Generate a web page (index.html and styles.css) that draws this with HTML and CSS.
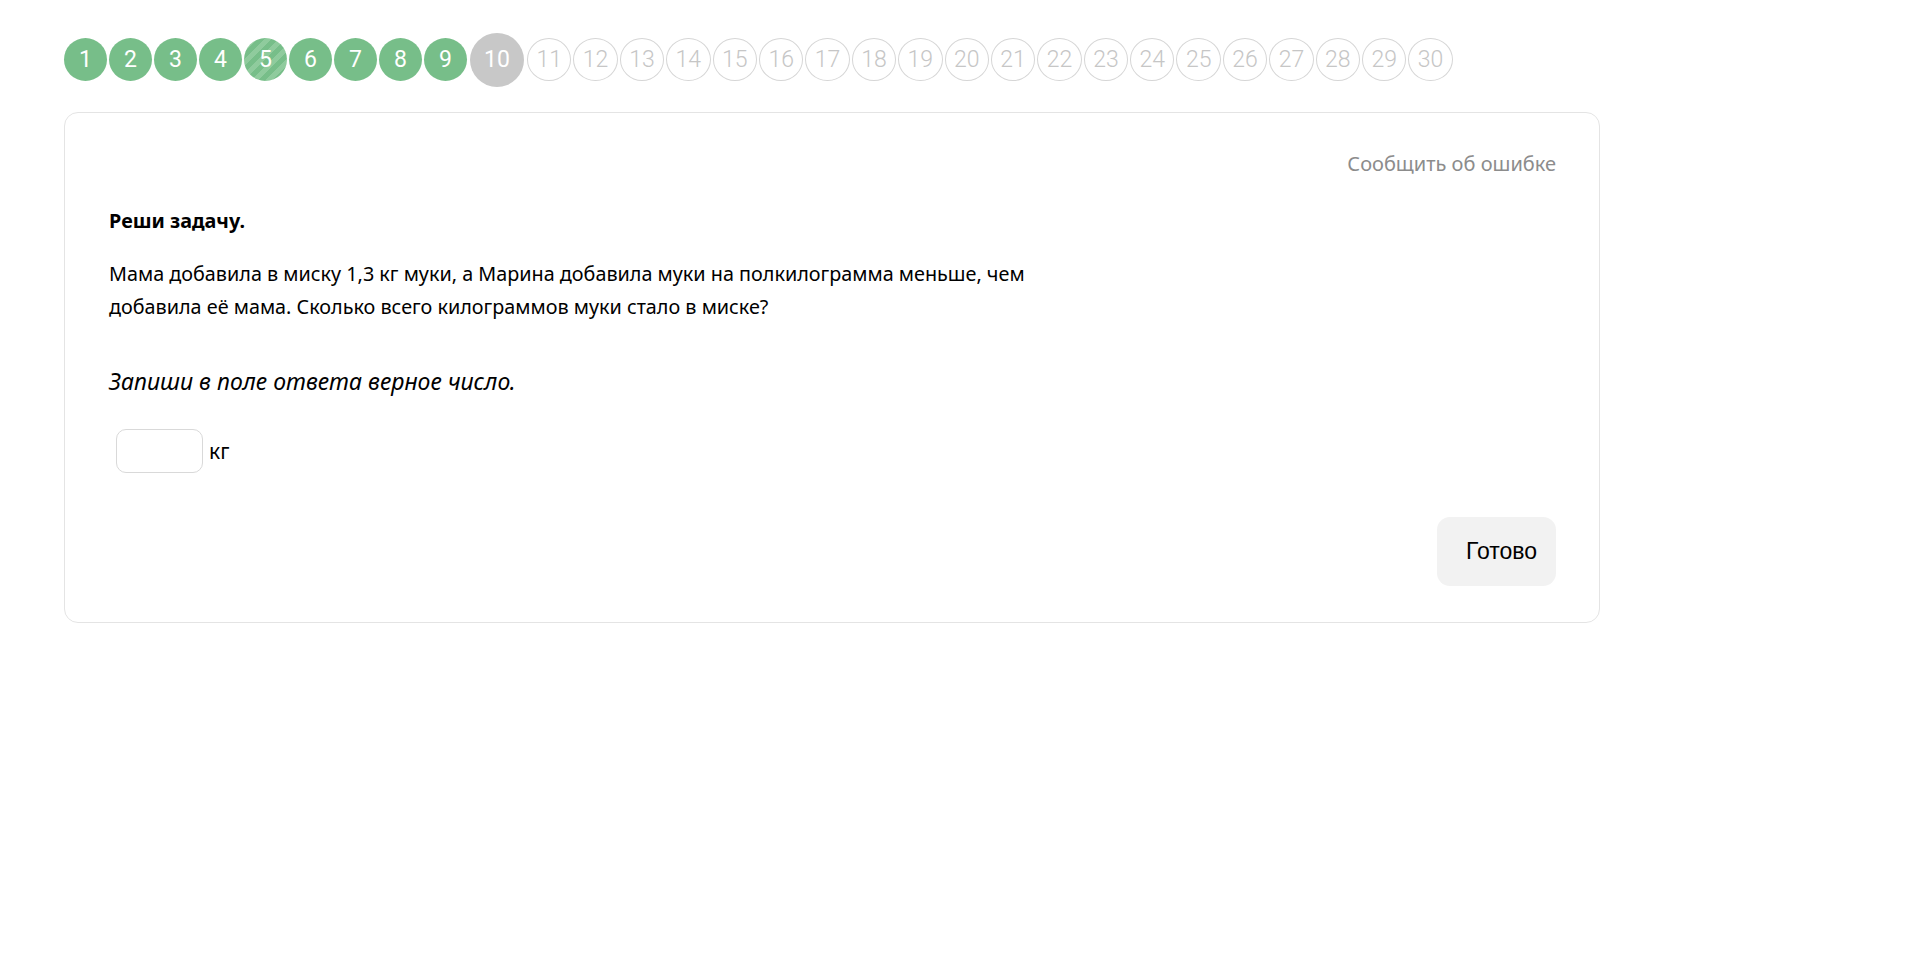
FILE: index.html
```html
<!DOCTYPE html>
<html lang="ru">
<head>
    <meta charset="UTF-8">
    <meta name="viewport" content="width=device-width, initial-scale=1.0">
    <title>Задание 10</title>
    <link rel="stylesheet" href="styles.css">
</head>
<body>
    <div class="page">
        <div class="steps">
            <span class="step done">1</span>
            <span class="step done">2</span>
            <span class="step done">3</span>
            <span class="step done">4</span>
            <span class="step partial">5</span>
            <span class="step done">6</span>
            <span class="step done">7</span>
            <span class="step done">8</span>
            <span class="step done">9</span>
            <span class="step current">10</span>
            <span class="step todo">11</span>
            <span class="step todo">12</span>
            <span class="step todo">13</span>
            <span class="step todo">14</span>
            <span class="step todo">15</span>
            <span class="step todo">16</span>
            <span class="step todo">17</span>
            <span class="step todo">18</span>
            <span class="step todo">19</span>
            <span class="step todo">20</span>
            <span class="step todo">21</span>
            <span class="step todo">22</span>
            <span class="step todo">23</span>
            <span class="step todo">24</span>
            <span class="step todo">25</span>
            <span class="step todo">26</span>
            <span class="step todo">27</span>
            <span class="step todo">28</span>
            <span class="step todo">29</span>
            <span class="step todo">30</span>
        </div>

        <div class="card">
            <div class="card-top">
                <a class="report" href="#">Сообщить об ошибке</a>
            </div>
            <div class="task-title">Реши задачу.</div>
            <p class="task-text">Мама добавила в миску 1,3 кг муки, а Марина добавила муки на полкилограмма меньше, чем добавила её мама. Сколько всего килограммов муки стало в миске?</p>
            <div class="task-hint">Запиши в поле ответа верное число.</div>
            <div class="answer">
                <input type="text" class="answer-input">
                <span class="unit">кг</span>
            </div>
            <div class="actions">
                <button type="button" class="btn-done">Готово</button>
            </div>
        </div>
    </div>
</body>
</html>
```

FILE: styles.css
```css
body {
    margin: 0;
    padding: 0;
    background: #fff;
    font-family: 'Noto Sans', 'Open Sans', sans-serif;
    color: #000;
}
.page {
    padding: 32px 0 0 64px;
    width: 1536px;
}

/* progress row */
.steps {
    display: flex;
    align-items: center;
    gap: 2px;
    height: 55px;
}
.step {
    display: flex;
    justify-content: center;
    align-items: center;
    width: 43px;
    height: 43px;
    border-radius: 50%;
    box-sizing: border-box;
    font-family: 'Roboto', sans-serif;
    font-size: 23px;
    font-weight: 400;
    color: #fff;
}
.step.done {
    background-color: #77be89;
}
.step.partial {
    background: repeating-linear-gradient(135deg, #77be89 0 5px, #8fcb9d 5px 10px);
}
.step.current {
    width: 54px;
    height: 54px;
    margin: 0 1px;
    background-color: #c8c8c8;
}
.step.todo {
    width: 44.4px;
    border: 1px solid #d6d6d6;
    color: #c6c6c6;
    font-weight: 300;
}

/* task card */
.card {
    margin-top: 25px;
    border: 1px solid #e4e4e4;
    border-radius: 14px;
    padding: 37px 43px 36px 44px;
}
.card-top {
    display: flex;
    justify-content: flex-end;
    line-height: 28px;
}
.report {
    color: #8c8c8c;
    font-size: 20px;
    text-decoration: none;
}
.task-title {
    margin-top: 29px;
    font-size: 19.8px;
    font-weight: bold;
    line-height: 28px;
}
.task-text {
    margin: 22px 0 0;
    max-width: 960px;
    font-size: 19.8px;
    line-height: 33px;
}
.task-hint {
    margin-top: 43px;
    font-size: 23px;
    font-style: italic;
    line-height: 30px;
}
.answer {
    display: flex;
    align-items: center;
    gap: 6px;
    margin: 33px 0 0 7px;
}
.answer-input {
    width: 87px;
    height: 44px;
    box-sizing: border-box;
    border: 1px solid #d9d9d9;
    border-radius: 10px;
    outline: none;
}
.unit {
    font-size: 21px;
}
.actions {
    display: flex;
    justify-content: flex-end;
    margin-top: 44px;
}
.btn-done {
    height: 69px;
    padding: 0 19px 0 29px;
    border: none;
    border-radius: 13px;
    background-color: #f2f2f2;
    font-family: 'Liberation Sans', Arial, sans-serif;
    font-size: 23px;
    color: #000;
    cursor: pointer;
}
```
